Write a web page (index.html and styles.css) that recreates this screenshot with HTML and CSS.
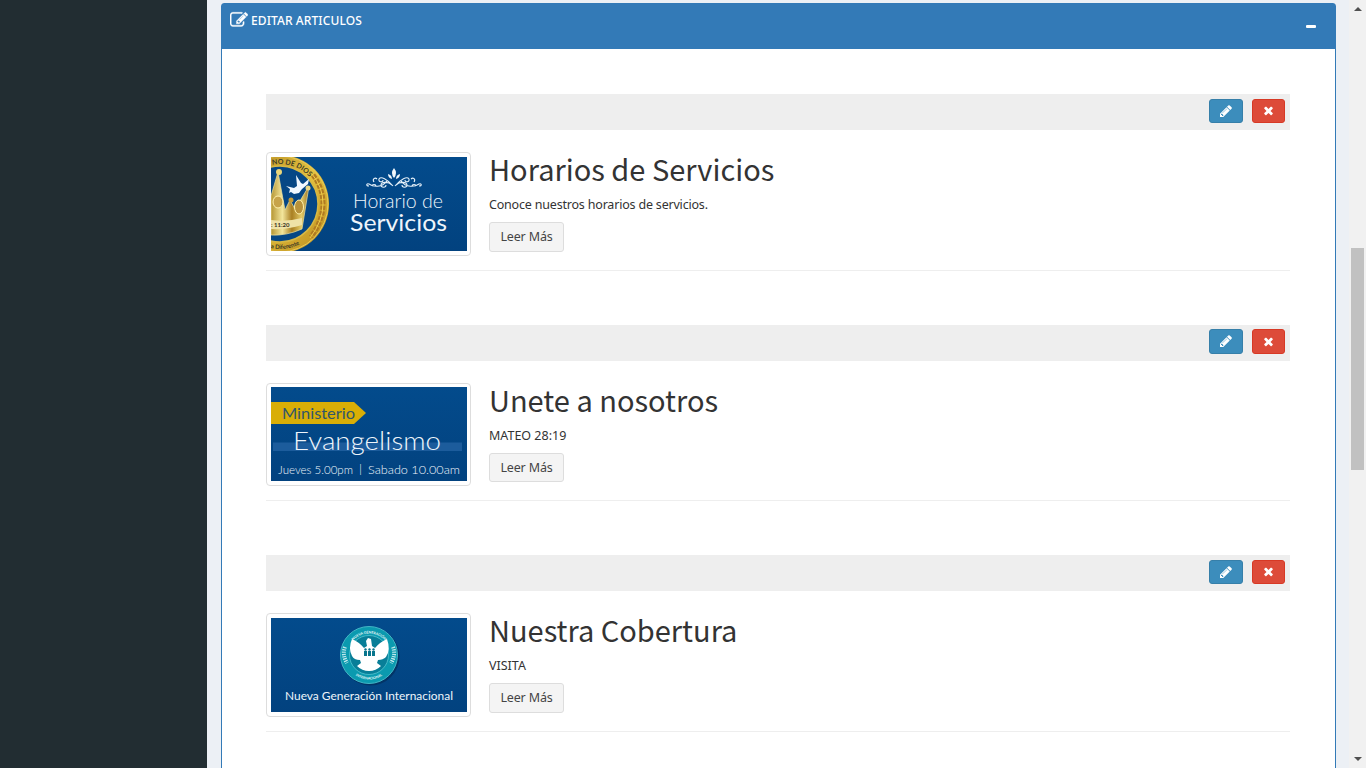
FILE: index.html
```html
<!DOCTYPE html>
<html lang="es">
<head>
<meta charset="utf-8">
<title>Editar articulos</title>
<link rel="stylesheet" href="styles.css">
</head>
<body>
<svg class="symbols" aria-hidden="true">
  <symbol id="edit" viewBox="0 0 1792 1792"><path d="M888 1184l116-116-152-152-116 116v56h96v96h56zm440-720q-16-16-33 1l-350 350q-17 17-1 33t33-1l350-350q17-17 1-33zm80 594v190q0 119-84.500 203.500t-203.500 84.500h-832q-119 0-203.500-84.500t-84.500-203.500v-832q0-119 84.500-203.500t203.500-84.500h832q63 0 117 25 15 7 18 23 3 17-9 29l-49 49q-14 14-32 8-23-6-45-6h-832q-66 0-113 47t-47 113v832q0 66 47 113t113 47h832q66 0 113-47t47-113v-126q0-13 9-22l64-64q15-15 35-7t20 29zm-96-738l288 288-672 672h-288v-288zm444 132l-92 92-288-288 92-92q28-28 68-28t68 28l152 152q28 28 28 68t-28 68z"/></symbol>
  <symbol id="pencil" viewBox="0 0 1792 1792"><path d="M491 1536l91-91-235-235-91 91v107h128v128h107zm523-928q0-22-22-22-10 0-17 7l-542 542q-7 7-7 17 0 22 22 22 10 0 17-7l542-542q7-7 7-17zm-54-192l416 416-832 832h-416v-416zm683 96q0 53-37 90l-166 166-416-416 166-165q36-38 90-38 53 0 91 38l235 234q37 39 37 91z"/></symbol>
  <symbol id="times" viewBox="0 0 1792 1792"><path d="M1490 1322q0 40-28 68l-136 136q-28 28-68 28t-68-28l-294-294-294 294q-28 28-68 28t-68-28l-136-136q-28-28-28-68t28-68l294-294-294-294q-28-28-28-68t28-68l136-136q28-28 68-28t68 28l294 294 294-294q28-28 68-28t68 28l136 136q28 28 28 68t-28 68l-294 294 294 294q28 28 28 68z"/></symbol>
</svg>
<div class="app">
  <aside class="sidebar"></aside>
  <main class="content">
    <section class="panel">
      <header class="panel-header">
        <h3 class="panel-title"><svg class="title-icon"><use href="#edit"/></svg><span class="title-text">EDITAR ARTICULOS</span></h3>
        <button class="collapse" aria-label="Contraer"><span class="minus"></span></button>
      </header>
      <div class="panel-body">
        <article class="article">
          <div class="toolbar">
            <button class="btn btn-edit" aria-label="Editar"><svg><use href="#pencil"/></svg></button>
            <button class="btn btn-delete" aria-label="Eliminar"><svg><use href="#times"/></svg></button>
          </div>
          <div class="row">
            <div class="thumb">
              <svg viewBox="0 0 196 94" preserveAspectRatio="none">
                <defs>
                  <linearGradient id="blue" x1="0" y1="0" x2="0" y2="1"><stop offset="0" stop-color="#034b8c"/><stop offset="1" stop-color="#02427f"/></linearGradient>
                  <linearGradient id="gold" x1="0" y1="0" x2="1" y2="1"><stop offset="0" stop-color="#a87d1c"/><stop offset=".5" stop-color="#e6c340"/><stop offset="1" stop-color="#b8891c"/></linearGradient>
                  <linearGradient id="crown" x1="0" y1="0" x2="1" y2="0"><stop offset="0" stop-color="#b59532"/><stop offset=".3" stop-color="#f3e69c"/><stop offset=".55" stop-color="#a97f22"/><stop offset=".8" stop-color="#e3cb68"/><stop offset="1" stop-color="#977226"/></linearGradient>
                  <path id="arcTop" d="M-31 47A40 40 0 0 1 49 47"/>
                  <path id="arcBottom" d="M-36 47A45 45 0 0 0 54 47"/>
                </defs>
                <rect width="196" height="94" fill="url(#blue)"/>
                <circle cx="9" cy="47" r="49" fill="url(#gold)"/>
                <circle cx="9" cy="47" r="48" fill="none" stroke="#e7c959" stroke-width="1"/>
                <circle cx="9" cy="47" r="38" fill="#064785" stroke="#d7b845" stroke-width="1.500"/>
                <path d="M42 18q10 13 10 29t-12 33" fill="none" stroke="#b07a22" stroke-width="5" stroke-dasharray="4 1.500"/>
                <path d="M41 17q11 13 11 30t-13 34" fill="none" stroke="#efcc4e" stroke-width="1"/>
                <text class="seal"><textPath href="#arcTop" startOffset="55">NO DE DIOS</textPath></text>
                <text class="seal seal-low"><textPath href="#arcBottom" startOffset="56">nia Diferente</textPath></text>
                <path d="M0 39L7 15l7 38 5-10 5 9 14-23-7 43q-16 7-31 6z" fill="url(#crown)" stroke="#eee3a0" stroke-width=".7"/>
                <circle cx="8" cy="15" r="3" fill="#ead67a"/><circle cx="20" cy="43" r="2.500" fill="#c69d37"/><circle cx="37" cy="31" r="2.500" fill="#e9d785"/>
                <ellipse cx="7" cy="45" rx="5" ry="6" fill="#c7a34a" stroke="#fff1ad"/><ellipse cx="28" cy="50" rx="4.500" ry="7" fill="#b8923b" stroke="#fff1ad"/>
                <path d="M0 63q16 2 31-2v7q-15 5-31 4z" fill="#efe2a7"/>
                <text x="0" y="69.500" class="verse">: 11:20</text>
                <path d="M15 29l8 2 3-2-1-11 5 8 2 1 6-5-1 5-6 5-3 4-5 1-3-2-2 1 1-4z" fill="#f1f8ff"/>
                <g class="flourish">
                  <path d="M122 29C116 22 110 19 108 22c-1 3 4 4 4 1M124 29c6-7 12-10 14-7 1 3-4 4-4 1M116 24c-5 7-14 6-18 3-3-1-3 2 0 2M130 24c5 7 14 6 18 3 3-1 3 2 0 2M121 28c-4-4-11-3-11 0s5 3 5 0M125 28c4-4 11-3 11 0s-5 3-5 0M106 22c-2-2-5 0-3 3M140 22c2-2 5 0 3 3M105 29c0-2-4-2-4 0M141 29c0-2 4-2 4 0"/>
                  <path d="M123 11q4 5 0 10q-4-5 0-10zM121 22q-4-1-4-5 4 1 4 5zM125 22q4-1 4-5-4 1-4 5z" fill="#f1f7fc" stroke="none"/>
                </g>
                <text x="82" y="50.500" textLength="90" lengthAdjust="spacingAndGlyphs" class="art art-hour">Horario de</text>
                <text x="79" y="73.500" textLength="97" lengthAdjust="spacingAndGlyphs" class="art art-service">Servicios</text>
              </svg>
            </div>
            <div class="info">
              <h2 class="heading">Horarios de Servicios</h2>
              <p class="text text-long">Conoce nuestros horarios de servicios.</p>
              <button class="more">Leer Más</button>
            </div>
          </div>
        </article>
        <article class="article article-compact">
          <div class="toolbar">
            <button class="btn btn-edit" aria-label="Editar"><svg><use href="#pencil"/></svg></button>
            <button class="btn btn-delete" aria-label="Eliminar"><svg><use href="#times"/></svg></button>
          </div>
          <div class="row">
            <div class="thumb">
              <svg viewBox="0 0 196 94" preserveAspectRatio="none">
                <rect width="196" height="94" fill="url(#blue)"/>
                <path d="M0 15h83l12 11-12 11H0z" fill="#d9ae06"/>
                <rect x="2" y="55.500" width="189" height="8.500" fill="#1c5c9c"/>
                <text x="11" y="32" textLength="73" lengthAdjust="spacingAndGlyphs" class="ministry">Ministerio</text>
                <text x="22" y="62.500" textLength="148" lengthAdjust="spacingAndGlyphs" class="art evangelism">Evangelismo</text>
                <text x="7" y="87" textLength="75" lengthAdjust="spacingAndGlyphs" class="art schedule">Jueves 5.00pm</text>
                <text x="88" y="86" class="art schedule">|</text>
                <text x="97" y="87" textLength="92" lengthAdjust="spacingAndGlyphs" class="art schedule">Sabado 10.00am</text>
              </svg>
            </div>
            <div class="info">
              <h2 class="heading">Unete a nosotros</h2>
              <p class="text">MATEO 28:19</p>
              <button class="more">Leer Más</button>
            </div>
          </div>
        </article>
        <article class="article">
          <div class="toolbar">
            <button class="btn btn-edit" aria-label="Editar"><svg><use href="#pencil"/></svg></button>
            <button class="btn btn-delete" aria-label="Eliminar"><svg><use href="#times"/></svg></button>
          </div>
          <div class="row">
            <div class="thumb">
              <svg viewBox="0 0 196 94" preserveAspectRatio="none">
                <defs>
                  <path id="ringTop" d="M76.500 37A21.500 21.500 0 0 1 119.500 37"/>
                  <path id="ringBottom" d="M73.500 37A24.500 24.500 0 0 0 122.500 37"/>
                </defs>
                <rect width="196" height="94" fill="url(#blue)"/>
                <circle cx="99.500" cy="38.500" r="29" fill="#033466"/>
                <circle cx="98" cy="37" r="28.500" fill="#0b9aaf" stroke="#43b5c6"/>
                <circle cx="98" cy="37" r="19.500" fill="#087e98" stroke="#56c4d0" stroke-width=".8"/>
                <text class="ring"><textPath href="#ringTop" startOffset="50%" text-anchor="middle">NUEVA GENERACIÓN</textPath></text>
                <text class="ring"><textPath href="#ringBottom" startOffset="50%" text-anchor="middle">INTERNACIONAL</textPath></text>
                <path d="M74 29q-3 8 2 16M122 29q3 8-2 16" fill="none" stroke="#bfe7ec" stroke-width="4" stroke-dasharray="1.300 1"/>
                <path d="M81 21q7 3 12 9l3-2-1-5 2-3 3 1 1 7 3 2q5-6 12-9 4 11-1 18-3 3-8 3l-1 3 4 3q-5 5-12 5t-12-5l4-3-1-3q-6 0-8-4-4-8 0-17z" fill="#fff"/>
                <path d="M93 33h3v5h-3zm4 0h3v5h-3zm4 0h3v5h-3z" fill="#08758d"/>
                <circle cx="94.500" cy="31.500" r="1.200" fill="#08758d"/><circle cx="98.500" cy="31.500" r="1.200" fill="#08758d"/><circle cx="102.500" cy="31.500" r="1.200" fill="#08758d"/>
                <text x="14" y="82" textLength="168" lengthAdjust="spacingAndGlyphs" class="art generation">Nueva Generación Internacional</text>
              </svg>
            </div>
            <div class="info">
              <h2 class="heading">Nuestra Cobertura</h2>
              <p class="text">VISITA</p>
              <button class="more">Leer Más</button>
            </div>
          </div>
        </article>
      </div>
    </section>
  </main>
  <div class="scrollbar"><span class="arrow arrow-up"></span><span class="handle"></span><span class="arrow arrow-down"></span></div>
</div>
</body>
</html>
```
FILE: styles.css
```css
* { box-sizing: border-box; }
body { margin: 0; height: 768px; overflow: hidden; font-family: "Noto Sans", sans-serif; font-size: 13px; color: #333; }
.symbols { display: none; }
.app { display: grid; grid-template-columns: 207px 1fr 17px; height: 768px; background: #ecf0f5; overflow: hidden; }
.sidebar { background: #222d32; }
.content { padding: 3px 13px 0 14px; min-width: 0; height: 768px; overflow: hidden; }
.panel { height: 780px; border: 1px solid #337ab7; border-radius: 3px 3px 0 0; background: #fff; }
.panel-header { height: 45px; padding: 7px 19px 0 8px; background: #337ab7; color: #fff; display: flex; justify-content: space-between; align-items: flex-start; }
.panel-title { margin: 0; display: flex; align-items: center; height: 18px; gap: 3px; font-weight: 500; font-size: 12px; }
.title-icon { width: 18px; height: 18px; fill: #fff; stroke: #fff; stroke-width: 35px; }
.title-text { letter-spacing: .1px; white-space: nowrap; }
.collapse { border: 0; padding: 14px 0 0; background: none; display: flex; }
.minus { width: 10px; height: 3px; background: #fff; border-radius: 1px; }
.panel-body { padding: 45px 45px 0 44px; }
.article { height: 231px; }
.toolbar { height: 36px; padding: 5px 5px 0 0; background: #eee; display: flex; justify-content: flex-end; gap: 9px; }
.btn { width: 34px; height: 24px; padding: 0 0 1px; border: 1px solid #367fa9; border-radius: 3px; background: #3c8dbc; display: flex; align-items: center; justify-content: center; }
.btn svg { width: 14px; height: 14px; fill: #fff; }
.btn-delete { width: 33px; background: #dd4b39; border-color: #d73925; }
.btn-delete svg { width: 13px; height: 13px; }
.row { height: 141px; padding-top: 22px; border-bottom: 1px solid #eee; display: flex; gap: 18px; }
.thumb { width: 205px; height: 104px; padding: 4px; border: 1px solid #ddd; border-radius: 4px; background: #fff; flex: none; }
.thumb svg { display: block; width: 196px; height: 94px; overflow: hidden; }
.info { display: flex; flex-direction: column; align-items: flex-start; }
.heading { margin: 0; height: 36px; line-height: 32px; font-family: "Noto Sans CJK SC", sans-serif; font-weight: 400; font-size: 29px; white-space: nowrap; color: #333; }
.text { margin: 7px 0; height: 20px; line-height: 20px; font-size: 12.500px; white-space: nowrap; color: #333; }
.text-long { letter-spacing: -.19px; }
.more { height: 30px; width: 75px; padding: 0 0 2px; border: 1px solid #ddd; border-radius: 3px; background: #f4f4f4; color: #444; font-family: "Noto Sans", sans-serif; font-size: 12.500px; letter-spacing: -.15px; }
.article-compact { height: 230px; }
.article-compact .toolbar { padding-top: 4px; }
.article-compact .btn { height: 25px; }
.article-compact .row { height: 140px; }
.article-compact .thumb { height: 103px; padding-top: 3px; }
.article-compact .more { height: 29px; padding-bottom: 1px; }
.art { font-family: Lato, sans-serif; font-weight: 300; fill: #eef5fb; }
.art-hour { font-size: 19px; }
.art-service { font-size: 23.500px; font-weight: 400; }
.evangelism { font-size: 26px; }
.ministry { font-family: Lato, sans-serif; font-size: 16px; fill: #31566b; }
.schedule { font-size: 12.500px; }
.generation { font-size: 12px; font-weight: 400; }
.seal { font-family: Lato, sans-serif; font-size: 7px; font-weight: 700; fill: #3c3b27; }
.seal-low { font-size: 6px; }
.verse { font-family: Lato, sans-serif; font-size: 6px; font-weight: 700; fill: #393423; }
.ring { font-family: Lato, sans-serif; font-size: 3.500px; font-weight: 700; fill: #edfafb; }
.flourish { fill: none; stroke: #e5f0f9; stroke-width: 1.100; }
.scrollbar { display: flex; flex-direction: column; justify-content: space-between; align-items: center; background: #f1f1f1; padding: 7px 2px 7px 2px; }
.handle { width: 13px; height: 222px; margin-bottom: 50px; background: #c1c1c1; }
.arrow { width: 0; height: 0; border-left: 4px solid transparent; border-right: 4px solid transparent; }
.arrow-up { border-bottom: 4px solid #505050; }
.arrow-down { border-top: 4px solid #505050; }
```
